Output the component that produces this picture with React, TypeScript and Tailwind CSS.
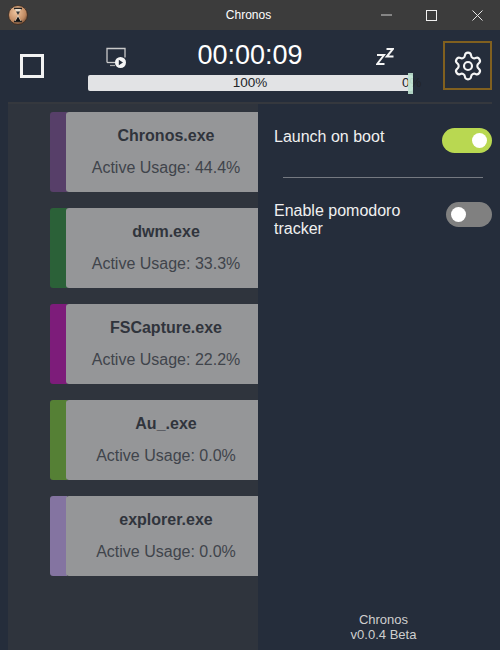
import { Settings } from "lucide-react";

const apps = [
  { name: "Chronos.exe", usage: "44.4%", color: "bg-[#573f69]" },
  { name: "dwm.exe", usage: "33.3%", color: "bg-[#2b6138]" },
  { name: "FSCapture.exe", usage: "22.2%", color: "bg-[#7d1c7a]" },
  { name: "Au_.exe", usage: "0.0%", color: "bg-[#558035]" },
  { name: "explorer.exe", usage: "0.0%", color: "bg-[#8474a1]" },
];

function TitleBar() {
  return (
    <div className="flex h-[30px] items-center bg-[#3c3c3c] text-white">
      <div className="flex w-[136px] shrink-0 pl-[8px]">
        <svg width="20" height="20" viewBox="0 0 20 20">
          <defs>
            <radialGradient id="bronze" cx="40%" cy="35%" r="70%">
              <stop offset="0%" stopColor="#f0c6a0" />
              <stop offset="70%" stopColor="#c08a62" />
              <stop offset="100%" stopColor="#6d4a33" />
            </radialGradient>
          </defs>
          <circle cx="10" cy="10" r="9.5" fill="url(#bronze)" stroke="#3a2a20" strokeWidth="0.8" />
          <path d="M6 3.5h8M6 16.5h8" stroke="#222" strokeWidth="1.5" />
          <path d="M7 4l3 6-3 6h6l-3-6 3-6z" fill="#e9dccb" />
          <path d="M7.5 16l2.5-4.5 2.5 4.5z" fill="#111" />
          <path d="M8 6.5h4L10 10z" fill="#333" />
        </svg>
      </div>
      <div className="flex-1 pr-[3px] text-center text-[12px] leading-[30px] [font-family:'Liberation_Sans',sans-serif]">
        Chronos
      </div>
      <div className="flex w-[136px] shrink-0 items-center">
        <div className="flex h-[30px] w-[45px] items-center justify-center">
          <div className="h-[2px] w-[11px] bg-[#858585]" />
        </div>
        <div className="flex h-[30px] w-[45px] items-center justify-center">
          <div className="h-[11px] w-[11px] border border-[#f0f0f0]" />
        </div>
        <div className="flex h-[30px] w-[46px] items-center justify-center">
          <svg width="11" height="11" viewBox="0 0 11 11">
            <path d="M0.5 0.5l10 10M10.5 0.5l-10 10" stroke="#e6e6e6" strokeWidth="1" />
          </svg>
        </div>
      </div>
    </div>
  );
}

function Header() {
  return (
    <div className="flex h-[72px] bg-[#252d3b]">
      <div className="flex w-[88px] shrink-0">
        <div className="ml-[20px] mt-[24px] h-[24px] w-[24px] border-[3px] border-[#f2f2f2]" />
      </div>
      <div className="w-[325px] shrink-0">
        <div className="flex h-[45px] items-start">
          <div className="ml-[17px] mt-[17px] w-[22px]">
            <svg width="22" height="22" viewBox="0 0 22 22" fill="none">
              <path d="M2 15.5V1.5h18v9" stroke="#c9c9c9" strokeWidth="1.3" fill="none" />
              <path d="M2 15.5h9" stroke="#c9c9c9" strokeWidth="1.3" />
              <path d="M5 18.5h5" stroke="#a8a8a8" strokeWidth="1.2" />
              <circle cx="15.5" cy="15.5" r="5.5" fill="#f5f5f5" />
              <path d="M13.8 12.7l4.2 2.8-4.2 2.8z" fill="#252d3b" />
            </svg>
          </div>
          <div className="ml-[69px] mt-[9px] w-[108px] text-center text-[27px] leading-[32px] text-white [font-family:'Liberation_Sans',sans-serif]">
            00:00:09
          </div>
          <div className="ml-[72px] mt-[17px]">
            <svg width="18" height="19" viewBox="0 0 18 19" fill="none" stroke="#f5f5f5" strokeWidth="2">
              <path d="M1 8h7L1.2 17h7.3" />
              <path d="M10.5 2h6.5L10.8 9.5h6.7" />
            </svg>
          </div>
        </div>
        <div className="relative flex h-[16px] items-center rounded-[2px] bg-[#e2e3e5]">
          <div className="flex-1 pr-[1px] text-center text-[13.5px] leading-[16px] text-[#212529] [font-family:'Liberation_Sans',sans-serif]">
            100%
          </div>
          <div className="absolute left-[314px] top-0 whitespace-nowrap text-[13.5px] leading-[16px] text-[#212529] [font-family:'Liberation_Sans',sans-serif]">
            0%
          </div>
          <div className="absolute top-[-2px] right-0 h-[21px] w-[5px] bg-[#bfe3d0]/90" />
        </div>
      </div>
      <div className="ml-[30px] mt-[11px] flex h-[49px] w-[49px] items-center justify-center border-2 border-[#81601f]">
        <Settings size={32} strokeWidth={1.6} color="#f5f5f5" />
      </div>
    </div>
  );
}

function AppCard({ name, usage, color }: { name: string; usage: string; color: string }) {
  return (
    <div className="flex h-[80px] overflow-hidden rounded-l-[3px]">
      <div className={`w-[17px] shrink-0 ${color}`} />
      <div className="-ml-[1px] flex-1 rounded-l-[3px] bg-[#959698] pl-[8px] text-center [font-family:'Liberation_Sans',sans-serif]">
        <div className="mt-[15px] text-[16px] leading-[18px] font-bold text-[#30343c]">{name}</div>
        <div className="mt-[14px] text-[16px] leading-[18px] text-[#40444b]">Active Usage: {usage}</div>
      </div>
    </div>
  );
}

function Toggle({ on }: { on: boolean }) {
  return (
    <div
      className={`flex h-[25px] items-center rounded-full ${
        on ? "w-[50px] justify-end bg-[#b9d851] pr-[5px]" : "w-[46px] justify-start bg-[#808080] pl-[5px]"
      }`}
    >
      <div className="h-[15px] w-[15px] rounded-full bg-white" />
    </div>
  );
}

export default function App() {
  return (
    <div className="flex h-[650px] w-[500px] flex-col overflow-hidden bg-[#252d3b]">
      <TitleBar />
      <Header />
      <div className="mx-[8px] h-[2px] bg-[#35383e]" />
      <div className="flex flex-1 pl-[8px]">
        <div className="flex w-[250px] flex-col gap-[16px] bg-[#2f343d] pl-[42px] pt-[8px]">
          {apps.map((a) => (
            <AppCard key={a.name} {...a} />
          ))}
        </div>
        <div className="flex flex-1 flex-col text-[#f0f0f0] [font-family:'Liberation_Sans',sans-serif]">
          <div className="flex items-start justify-between pl-[16px] pr-[8px] pt-[24px]">
            <div className="text-[16px] leading-[18px]">Launch on boot</div>
            <Toggle on />
          </div>
          <div className="ml-[25px] mr-[17px] mt-[24px] h-[1px] bg-[#757981]" />
          <div className="flex items-start justify-between pl-[16px] pr-[8px] pt-[24px]">
            <div className="w-[170px] text-[16px] leading-[18px]">Enable pomodoro tracker</div>
            <Toggle on={false} />
          </div>
          <div className="mt-auto pb-[8px] pl-[9px] text-center text-[13px] leading-[15px] text-[#cfcfcf]">
            <div>Chronos</div>
            <div>v0.0.4 Beta</div>
          </div>
        </div>
      </div>
    </div>
  );
}
